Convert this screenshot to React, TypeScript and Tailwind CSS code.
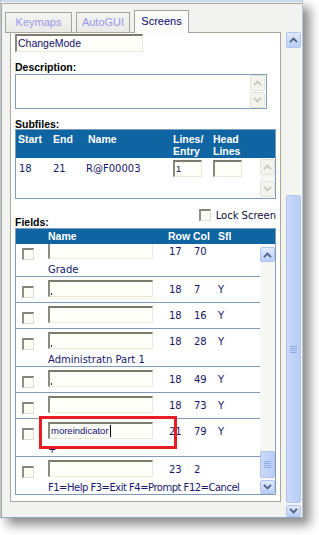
import React from "react";
import { clsx } from "clsx";

const VERD = "font-['DejaVu_Sans',Verdana,sans-serif]";
const ARIAL = "font-['Liberation_Sans',Arial,sans-serif]";
const NAVY = "text-[#17176b]";

type Dir = "up" | "down";

const Arrow: React.FC<{ dir: Dir; off?: boolean }> = ({ dir, off }) => (
  <svg width="9" height="6" viewBox="0 0 9 6">
    <path
      d={dir === "up" ? "M1 5.2 L4.5 1.6 L8 5.2" : "M1 0.8 L4.5 4.4 L8 0.8"}
      fill="none"
      stroke={off ? "#c9c8bf" : "#4d6185"}
      strokeWidth="1.8"
    />
  </svg>
);

const ScrollBtn: React.FC<{ dir: Dir; off?: boolean; className?: string }> = ({ dir, off, className }) => (
  <div
    className={clsx(
      "w-[15px] shrink-0 flex items-center justify-center rounded-[2px] border",
      off
        ? "bg-[#f4f4ef] border-[#e4e3da]"
        : "bg-gradient-to-b from-[#e1eafd] to-[#b9cdf6] border-[#b0c5ef]",
      className
    )}
  >
    <Arrow dir={dir} off={off} />
  </div>
);

const Thumb: React.FC<{ className?: string }> = ({ className }) => (
  <div
    className={clsx(
      "w-[15px] shrink-0 rounded-[2px] border border-[#b0c5ef] bg-gradient-to-r from-[#cad9fb] to-[#b9cdf6] flex items-center justify-center",
      className
    )}
  >
    <div className="flex flex-col gap-[1px]">
      {[0, 1, 2, 3].map((i) => (
        <div key={i} className="w-[7px] h-px bg-[#8eaae8]" />
      ))}
    </div>
  </div>
);

const Field: React.FC<{ className?: string; children?: React.ReactNode }> = ({ className, children }) => (
  <div
    className={clsx(
      "h-[17px] border-t-2 border-l-2 border-b border-r border-t-[#7b7b6d] border-l-[#8b8b7d] border-b-[#eae9da] border-r-[#eae9da] bg-[#fffffa] flex",
      className
    )}
  >
    {children}
  </div>
);

const Check = () => (
  <div className="w-[12px] h-[12px] border-t-2 border-l-2 border-t-[#858579] border-l-[#8f8f83] border-b border-r border-b-[#dddcd2] border-r-[#dddcd2] bg-[#fcfcf7]" />
);

const rows = [
  { r: "17", c: "70", s: "", label: "Grade" },
  { r: "18", c: "7", s: "Y", mark: true },
  { r: "18", c: "16", s: "Y" },
  { r: "18", c: "28", s: "Y", mark: true, label: "Administratn Part 1" },
  { r: "18", c: "49", s: "Y", mark: true },
  { r: "18", c: "73", s: "Y" },
  { r: "21", c: "79", s: "Y", value: "moreindicator", label: "+", boxed: true },
  { r: "23", c: "2", s: "", label: "F1=Help F3=Exit F4=Prompt F12=Cancel", tight: true },
];

export default function App() {
  return (
    <div className="w-[319px] h-[535px] bg-white">
      <div className="w-[303px] h-[518px] flex flex-col border-l border-r border-b border-l-[#b9c6d8] border-r-[#b9c6d8] border-b-[#8fa5c3] shadow-[7px_7px_10px_rgba(0,0,0,0.45)] bg-[#f2f2f0]">
        <div className="h-[2px] shrink-0 bg-[#c9dbf3]" />
        <div className="h-px shrink-0 bg-[#eef2f7]" />
        <div className="flex-1 flex flex-col border-t border-l border-[#aca899] min-h-0">
          {/* tabs */}
          <div className={clsx("h-[28px] shrink-0 flex items-end pl-[3px] gap-[4px] text-[11px]", ARIAL)}>
            <div className="h-[21px] w-[67px] -mb-px flex items-center justify-center border border-[#a3a39b] bg-gradient-to-b from-[#f4f4f2] to-[#e9e9e6] text-[#9799ee]">
              Keymaps
            </div>
            <div className="h-[21px] w-[54px] -mb-px flex items-center justify-center border border-[#a3a39b] bg-gradient-to-b from-[#f4f4f2] to-[#e9e9e6] text-[#9799ee]">
              AutoGUI
            </div>
            <div className="relative z-10 h-[23px] w-[55px] -mb-px flex items-center justify-center border border-b-0 border-[#a3a39b] bg-[#fbfbfa] text-[#0a0a72] pb-[1px]">
              Screens
            </div>
          </div>

          {/* body */}
          <div className="flex-1 flex min-h-0">
            {/* panel */}
            <div className={clsx("ml-[8px] w-[271px] h-[470px] shrink-0 border border-[#a9a79b] bg-white overflow-hidden flex flex-col px-[4px] text-[10px]", VERD, NAVY)}>
              <Field className={clsx("mt-[1px] h-[18px] w-[128px] items-center pl-[1px] text-[10.5px] text-[#10106e]", ARIAL)}>
                ChangeMode
              </Field>

              <div className={clsx("mt-[10px] leading-[10px] font-bold text-[10.5px] text-black", ARIAL)}>Description:</div>
              <div className="mt-[2px] h-[35px] w-[252px] border border-[#7f9db9] flex justify-end pr-px">
                <div className="flex flex-col gap-px">
                  <ScrollBtn dir="up" off className="h-[16px]" />
                  <ScrollBtn dir="down" off className="h-[16px]" />
                </div>
              </div>

              <div className={clsx("mt-[10px] leading-[10px] font-bold text-[10.5px] text-black", ARIAL)}>Subfiles:</div>
              <div className="h-[70px] shrink-0 border border-[#7f9db9] flex flex-col">
                <div className={clsx("h-[28px] shrink-0 bg-[#0f64a2] text-white font-bold text-[10.5px] leading-[12px] flex pt-[3px]", ARIAL)}>
                  <div className="w-[35px] pl-[2px]">Start</div>
                  <div className="w-[35px] pl-[2px]">End</div>
                  <div className="w-[85px] pl-[2px]">Name</div>
                  <div className="w-[40px] pl-[2px]">
                    Lines/
                    <br />
                    Entry
                  </div>
                  <div className="pl-[2px]">
                    Head
                    <br />
                    Lines
                  </div>
                </div>
                <div className="flex-1 flex">
                  <div className="w-[35px] pl-[3px] pt-[4px] leading-[13px]">18</div>
                  <div className="w-[35px] pl-[2px] pt-[4px] leading-[13px]">21</div>
                  <div className="w-[85px] pt-[4px] leading-[13px]">R@F00003</div>
                  <div className="w-[40px] pl-[2px] pt-[2px]">
                    <Field className={clsx("w-[29px] items-center pl-[1px] text-[9.5px] text-[#10106e]", ARIAL)}>1</Field>
                  </div>
                  <div className="w-[49px] pl-[2px] pt-[2px]">
                    <Field className="w-[29px]" />
                  </div>
                  <div className="pt-[1px] flex flex-col">
                    <ScrollBtn dir="up" off className="h-[16px]" />
                    <div className="h-[6px] bg-[#f7f7f3] w-[15px]" />
                    <ScrollBtn dir="down" off className="h-[16px]" />
                  </div>
                </div>
              </div>

              <div className="mt-[9px] h-[20px] shrink-0 flex justify-between">
                <div className={clsx("mt-[9px] leading-[10px] font-bold text-[10.5px] text-black", ARIAL)}>Fields:</div>
                <div className="h-[14px] flex items-center gap-[5px] leading-[13px] text-[#101040]">
                  <Check />
                  <span>Lock Screen</span>
                </div>
              </div>

              {/* fields table */}
              <div className="h-[267px] shrink-0 border border-[#7f9db9] flex flex-col">
                <div className={clsx("h-[15px] shrink-0 bg-[#0f64a2] text-white font-bold text-[10.5px] leading-[13px] flex pt-[1px]", ARIAL)}>
                  <div className="w-[152px] pl-[32px]">Name</div>
                  <div className="w-[25px]">Row</div>
                  <div className="w-[25px]">Col</div>
                  <div>Sfl</div>
                </div>
                <div className="h-[250px] flex">
                  <div className="w-[244px] overflow-hidden flex flex-col">
                    {rows.map((row, i) => (
                      <div
                        key={i}
                        className={clsx(
                          "relative flex shrink-0",
                          i === 0 && "-mt-[5px]",
                          i < rows.length - 1 && "border-b border-[#7f9db9]",
                          !row.label && "pb-[4px]"
                        )}
                      >
                        <div className="w-[32px] shrink-0 pl-[6px] pt-[9px]">
                          <Check />
                        </div>
                        <div className="w-[120px] shrink-0 pt-[3px]">
                          <Field className="w-[105px] items-end">
                            {row.mark && <div className="ml-px mb-px w-px h-[2px] bg-[#2a2a50]" />}
                            {row.value && (
                              <div className={clsx("self-center flex items-center pl-px text-[9.5px] text-[#10106e]", ARIAL)}>
                                {row.value}
                                <div className="ml-px w-px h-[12px] bg-black" />
                              </div>
                            )}
                          </Field>
                          {row.label && (
                            <div
                              className={clsx(
                                "mt-[4px] leading-[13px] whitespace-nowrap",
                                row.tight && "tracking-[-0.5px]"
                              )}
                            >
                              {row.label}
                            </div>
                          )}
                        </div>
                        <div className="w-[25px] shrink-0 pl-px pt-[6px] leading-[13px]">{row.r}</div>
                        <div className="w-[25px] shrink-0 pl-px pt-[6px] leading-[13px]">{row.c}</div>
                        <div className="pt-[6px] leading-[13px]">{row.s}</div>
                        {row.boxed && (
                          <div className="absolute left-[23px] -top-[3px] w-[138px] h-[33px] border-[3px] border-[#ea1c24]" />
                        )}
                      </div>
                    ))}
                  </div>
                  <div className="flex-1 flex flex-col bg-[#f7f7f3]">
                    <ScrollBtn dir="up" className="mt-[3px] h-[15px]" />
                    <div className="flex-1" />
                    <Thumb className="h-[27px]" />
                    <ScrollBtn dir="down" className="mt-[2px] h-[14px]" />
                  </div>
                </div>
              </div>
            </div>

            {/* outer scrollbar */}
            <div className="flex-1 flex flex-col pl-[5px] bg-gradient-to-r from-[#f3f3ee] to-[#f7f7f2]">
              <ScrollBtn dir="up" className="h-[16px]" />
              <div className="flex-1" />
              <Thumb className="h-[308px]" />
              <ScrollBtn dir="down" className="mt-[2px] h-[12px]" />
            </div>
          </div>
        </div>
      </div>
    </div>
  );
}
